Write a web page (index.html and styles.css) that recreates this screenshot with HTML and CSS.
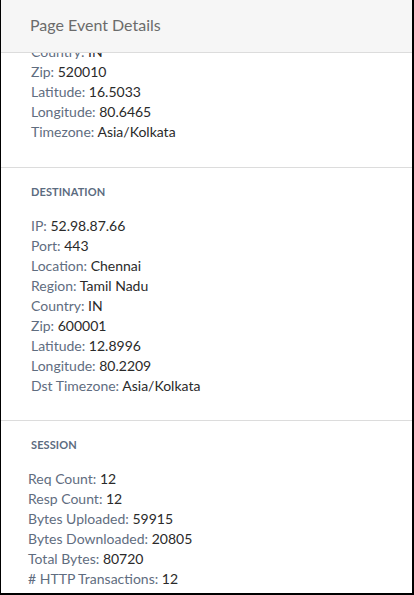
FILE: index.html
```html
<!DOCTYPE html>
<html>
<head>
<meta charset="utf-8">
<link rel="stylesheet" href="styles.css">
</head>
<body>
<div class="frame">
  <header class="header">
    <h1 class="title">Page Event Details</h1>
  </header>
  <div class="body">
    <div class="scroll">
      <section class="section section--first">
        <div class="row"><span class="label">Country:</span> <span class="value">IN</span></div>
        <div class="row"><span class="label">Zip:</span> <span class="value">520010</span></div>
        <div class="row"><span class="label">Latitude:</span> <span class="value">16.5033</span></div>
        <div class="row"><span class="label">Longitude:</span> <span class="value">80.6465</span></div>
        <div class="row"><span class="label">Timezone:</span> <span class="value">Asia/Kolkata</span></div>
      </section>
      <section class="section section--mid">
        <h2 class="heading">Destination</h2>
        <div class="row"><span class="label">IP:</span> <span class="value">52.98.87.66</span></div>
        <div class="row"><span class="label">Port:</span> <span class="value">443</span></div>
        <div class="row"><span class="label">Location:</span> <span class="value">Chennai</span></div>
        <div class="row"><span class="label">Region:</span> <span class="value">Tamil Nadu</span></div>
        <div class="row"><span class="label">Country:</span> <span class="value">IN</span></div>
        <div class="row"><span class="label">Zip:</span> <span class="value">600001</span></div>
        <div class="row"><span class="label">Latitude:</span> <span class="value">12.8996</span></div>
        <div class="row"><span class="label">Longitude:</span> <span class="value">80.2209</span></div>
        <div class="row"><span class="label">Dst Timezone:</span> <span class="value">Asia/Kolkata</span></div>
      </section>
      <section class="section">
        <h2 class="heading">Session</h2>
        <div class="rows rows--shift">
          <div class="row"><span class="label">Req Count:</span> <span class="value">12</span></div>
          <div class="row"><span class="label">Resp Count:</span> <span class="value">12</span></div>
          <div class="row"><span class="label">Bytes Uploaded:</span> <span class="value">59915</span></div>
          <div class="row"><span class="label">Bytes Downloaded:</span> <span class="value">20805</span></div>
          <div class="row"><span class="label">Total Bytes:</span> <span class="value">80720</span></div>
          <div class="row"><span class="label"># HTTP Transactions:</span> <span class="value">12</span></div>
        </div>
      </section>
    </div>
  </div>
</div>
</body>
</html>
```
FILE: styles.css
```css
* { box-sizing: border-box; }
html, body { margin: 0; padding: 0; background: #fff; }
body { font-family: Lato, "Open Sans", sans-serif; }

.frame {
  width: 414px;
  height: 595px;
  border-left: 1px solid #000;
  border-right: 2px solid #000;
  border-bottom: 2px solid #000;
  display: flex;
  flex-direction: column;
  overflow: hidden;
}

.header {
  margin-left: -1px;
  height: 53px;
  flex: none;
  background: #f6f6f6;
  border-bottom: 1px solid #dcdcdc;
  padding: 0 30px;
  display: flex;
  align-items: center;
}
.title {
  margin: 0;
  font-size: 16px;
  font-weight: 400;
  color: #6b6b6b;
  line-height: 20px;
  position: relative;
  top: -1px;
}

.body { flex: 1; overflow: hidden; }
.scroll { margin-top: -11px; }

.section {
  padding: 16px 30px 25px;
  border-bottom: 1px solid #dcdcdc;
}
.section--first { padding-top: 0; }
.section--mid { padding-bottom: 24px; }

.heading {
  margin: 0 0 16px;
  font-size: 11px;
  font-weight: 700;
  text-transform: uppercase;
  color: #5b6b80;
  line-height: 16px;
  letter-spacing: 0.1px;
}

.row {
  font-size: 14px;
  line-height: 20px;
  white-space: nowrap;
}
.label { color: #5f6d80; }
.value { color: #2a2a2a; }

.rows--shift { margin-left: -3px; }
```
